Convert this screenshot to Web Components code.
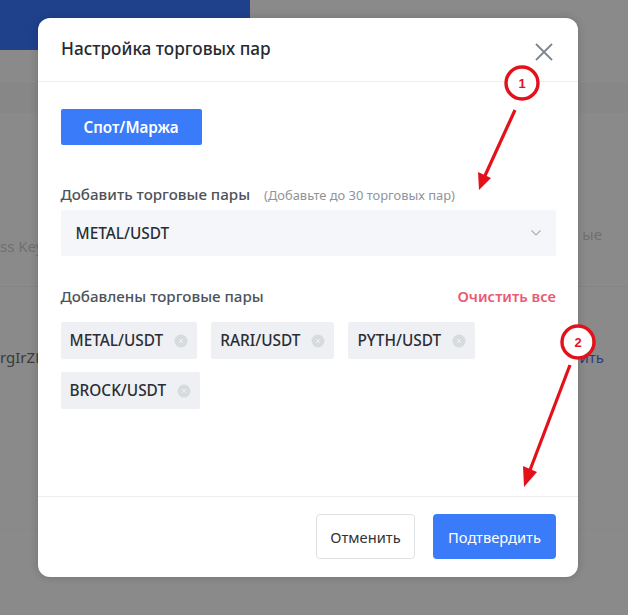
<!DOCTYPE html>
<html lang="ru"><head><meta charset="utf-8"><title>Настройка торговых пар</title>
<style>html,body{margin:0;padding:0;width:628px;height:615px;overflow:hidden;background:#8a8a8a;font-family:"Noto Sans","Open Sans",sans-serif}</style>
</head><body>
<page-backdrop></page-backdrop>
<pair-modal>
  <span slot="title">Настройка торговых пар</span>
</pair-modal>
<note-arrow n="1"></note-arrow>
<note-arrow n="2"></note-arrow>
<script>
function def(name,html){customElements.define(name,class extends HTMLElement{connectedCallback(){if(this.shadowRoot)return;const r=this.attachShadow({mode:'open'});r.innerHTML=typeof html==='function'?html(this):html;}})}

def('page-backdrop',`<style>
:host{display:block;position:absolute;inset:0;background:#8a8a8a;color:#707070;font:15px "Noto Sans",sans-serif;overflow:hidden}
.hero{height:50px;display:flex}.hero i{width:250px;background:#1f418c}
.band{margin-top:33px;height:30px;background:#878787}
.head{height:174px;display:flex;justify-content:space-between;box-sizing:border-box;padding-top:123px;border-bottom:1px solid #848484}
.head span{line-height:20px;height:20px}
.head .r{margin-right:26px;margin-top:-12px}
.row{height:243px;display:flex;justify-content:space-between;align-items:flex-start;padding-top:60px;box-sizing:border-box;border-bottom:1px solid #878787}
.row .l{color:#3b3b3b}.row .r{color:#2a3f78;margin-right:24px}
</style>
<div class="hero"><i></i></div><div class="band"></div>
<div class="head"><span class="l">ss Key</span><span class="r">ые</span></div>
<div class="row"><span class="l">rgIrZLS</span><span class="r">ить</span></div>`);

def('pair-chip',`<style>
:host{display:inline-flex;align-items:center;height:37px;padding:0 9px;gap:11px;background:#eef0f3;border-radius:2px;font:500 15.4px/37px "Noto Sans",sans-serif;color:#2a2d33;white-space:nowrap}
svg{width:14px;height:14px;display:block}
</style><slot></slot><svg viewBox="0 0 14 14"><circle cx="7" cy="7" r="6.5" fill="#d8dbde"/><path d="M5 5l4 4M9 5l-4 4" stroke="#eef0f3" stroke-width="1"/></svg>`);

def('action-button',h=>`<style>
:host{display:inline-flex;align-items:center;justify-content:center;box-sizing:border-box;height:45px;border-radius:4px;font:400 14.7px "Noto Sans",sans-serif;
${h.hasAttribute('primary')?'background:#3a7bfa;color:#fff;width:123px;':'background:#fff;color:#333;border:1px solid #dfe1e5;width:99px;'}}
</style><slot></slot>`);

def('pair-modal',`<style>
:host{display:block;position:absolute;left:38px;top:18px;width:540px;height:559px;background:#fff;border-radius:12px;box-shadow:0 0 8px rgba(0,0,0,.18);color:#2a2d33;font:15px "Noto Sans",sans-serif}
.wrap{height:100%;display:flex;flex-direction:column}
header{height:63px;flex:none;display:flex;align-items:center;justify-content:space-between;padding:0 24px 0 23px;border-bottom:1px solid #eceef0}
h2{margin:0;font:500 17.2px "Noto Sans",sans-serif;color:#272a30;position:relative;top:-1px}
.close{width:20px;height:20px;display:block;position:relative;top:2px}
main{flex:1;padding:27px 22px 0 22.5px;min-height:0}
.tab{display:flex;align-items:center;justify-content:center;width:141px;height:36px;background:#3a7bfa;color:#fff;border-radius:2px;font-weight:600;font-size:15.2px}
.lab{display:flex;align-items:baseline;justify-content:space-between;color:#4e5259;font-weight:500;font-size:15.15px;line-height:20px}
.lab small{font-size:12.9px;font-weight:400;color:#8f949b;margin-left:14px}
.lab b{font-weight:600;color:#ea5a71;font-size:14.75px}
.first{margin-top:39px}
.select{margin-top:5px;height:46px;background:#f5f6fa;border-radius:2px;display:flex;align-items:center;justify-content:space-between;padding:0 14px 0 15px;color:#2a2d33;font-weight:500;font-size:15.4px}
.select svg{width:12px;height:8px;display:block}
.second{margin-top:30px}
.chips{display:flex;flex-wrap:wrap;gap:13px 14px;margin-top:16px}
footer{height:81px;box-sizing:border-box;flex:none;border-top:1px solid #eceef0;display:flex;justify-content:flex-end;align-items:flex-start;gap:18px;padding:17px 22px 0 0}
</style>
<div class="wrap">
<header><h2><slot name="title"></slot></h2>
<svg class="close" viewBox="0 0 20 20"><path d="M2 2l16 16M18 2L2 18" stroke="#7e8893" stroke-width="1.9" fill="none"/></svg></header>
<main>
<div class="tab">Спот/Маржа</div>
<div class="lab first"><span>Добавить торговые пары<small>(Добавьте до 30 торговых пар)</small></span></div>
<div class="select"><span>METAL/USDT</span><svg viewBox="0 0 12 8"><path d="M1.5 1.5L6 6l4.5-4.5" stroke="#a9aeb5" stroke-width="1.2" fill="none"/></svg></div>
<div class="lab second"><span>Добавлены торговые пары</span><b>Очистить все</b></div>
<div class="chips"><pair-chip>METAL/USDT</pair-chip><pair-chip>RARI/USDT</pair-chip><pair-chip>PYTH/USDT</pair-chip><pair-chip>BROCK/USDT</pair-chip></div>
</main>
<footer><action-button>Отменить</action-button><action-button primary>Подтвердить</action-button></footer>
</div>`);

def('note-arrow',h=>{
 const two=h.getAttribute('n')==='2';
 const d=two?'M570 365 L527 478':'M515 110 L483 180';
 const tip=two?'M524 487 L523 466 L537 472 Z':'M479 190 L478 172 L491 178 Z';
 const c=two?[578,342]:[522,83];
 return `<style>:host{display:block;position:absolute;inset:0;pointer-events:none}
 svg{position:absolute;left:0;top:0;width:628px;height:615px}
 .n{position:absolute;left:${c[0]-10}px;top:${c[1]-10}px;width:20px;height:20px;display:flex;align-items:center;justify-content:center;color:#e0141c;font:700 13px "Liberation Sans",sans-serif}</style>
 <svg viewBox="0 0 628 615"><circle cx="${c[0]}" cy="${c[1]}" r="16" fill="#fff" stroke="#e3111a" stroke-width="3.4"/><path d="${d}" stroke="#e3111a" stroke-width="3.2" fill="none"/><path d="${tip}" fill="#e3111a"/></svg><div class="n">${h.getAttribute('n')}</div>`;
});
</script>
</body></html>
